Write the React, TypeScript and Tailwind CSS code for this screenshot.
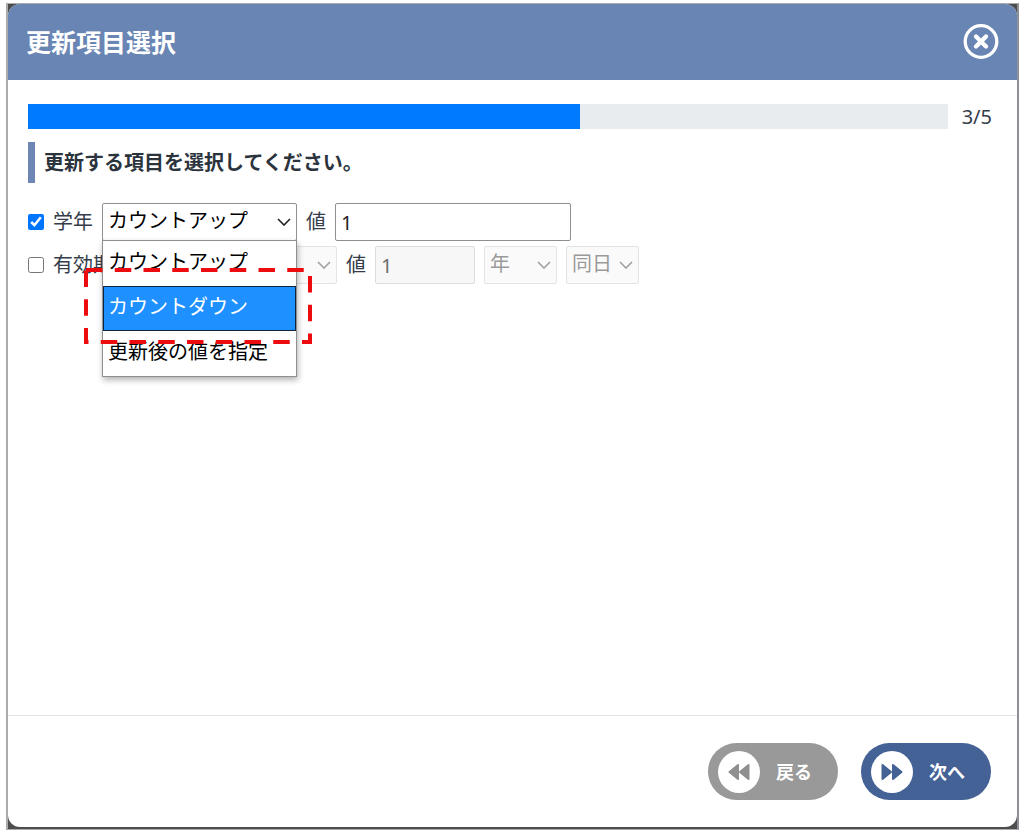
import React, { useState } from 'react';
import clsx from 'clsx';

const MODES = ['カウントアップ', 'カウントダウン', '更新後の値を指定'];

const STEP = 3;
const TOTAL_STEPS = 5;

interface SelectFieldProps {
  label: string;
  options: string[];
  className?: string;
  disabled?: boolean;
  value?: string;
  onChange?: (value: string) => void;
  children?: React.ReactNode;
}

function SelectField({ label, options, className, disabled, value, onChange, children }: SelectFieldProps) {
  return (
    <div className={clsx('relative shrink-0', className)}>
      <select
        aria-label={label}
        disabled={disabled}
        value={value ?? options[0]}
        onChange={(e) => onChange?.(e.target.value)}
        className="block h-[38px] w-full appearance-none rounded-xs border border-[#8f8f8f] bg-white pb-[2px] pl-[5px] pr-6 text-black disabled:border-[#e3e3e3] disabled:bg-[#fafafa] disabled:text-[#9a9a9a] disabled:opacity-100"
      >
        {options.map((option) => (
          <option key={option}>{option}</option>
        ))}
      </select>
      <svg
        viewBox="0 0 14 8"
        className={clsx(
          'pointer-events-none absolute right-[6px] top-[15px] h-2 w-[14px]',
          disabled ? 'text-[#a0a0a0]' : 'text-[#222]'
        )}
        fill="none"
        stroke="currentColor"
        strokeWidth="1.6"
      >
        <path d="M1 1l6 6 6-6" />
      </svg>
      {children}
    </div>
  );
}

function ArrowsIcon({ flip }: { flip?: boolean }) {
  return (
    <svg
      viewBox="0 0 22 18"
      className={clsx('h-[18px] w-[22px]', flip && '-scale-x-100')}
      fill="currentColor"
      stroke="currentColor"
      strokeWidth="2"
      strokeLinejoin="round"
    >
      <path d="M1.5 2v14L10 9z" />
      <path d="M12 2v14l8.500-7z" />
    </svg>
  );
}

export default function App() {
  const [mode, setMode] = useState(MODES[0]);
  const [active, setActive] = useState(MODES[1]);
  const [open, setOpen] = useState(true);

  const choose = (option: string) => {
    setMode(option);
    setOpen(false);
  };

  return (
    <div className="flex min-h-screen flex-col bg-white pb-[3px] pl-[6px] pr-[5px] pt-[3px] font-['Noto_Sans','Noto_Sans_CJK_JP',sans-serif] text-xl leading-[30px] text-[#343d49]">
      <div className="flex flex-1 flex-col border-x-2 border-y border-l-[#a9abad] border-r-[#8d9095] border-y-[#a9abad] bg-[#4d4d4d] pb-[2px]">
        <div role="dialog" aria-labelledby="dialog-title" className="flex flex-1 flex-col overflow-hidden rounded-xl bg-white">
          <header className="flex h-[76px] items-center justify-between bg-[#6985b3] px-[18px] text-white">
            <h1 id="dialog-title" className="text-[25px] font-bold">更新項目選択</h1>
            <button type="button" aria-label="閉じる" className="block">
              <svg viewBox="0 0 36 36" className="size-9" fill="none" stroke="currentColor">
                <circle cx="18" cy="17.500" r="15.800" strokeWidth="3.300" />
                <path d="M13 12.500l10 10M23 12.500L13 22.500" strokeWidth="4.400" strokeLinecap="round" />
              </svg>
            </button>
          </header>

          <main className="flex-1 px-5 pt-6">
            <div className="flex h-[25px] items-center gap-[14px] pr-[5px]">
              <div
                role="progressbar"
                aria-valuenow={STEP}
                aria-valuemax={TOTAL_STEPS}
                className="h-full flex-1 bg-[#e9ecef]"
              >
                <div className="h-full bg-[#007bff]" style={{ width: `${(STEP / TOTAL_STEPS) * 100}%` }} />
              </div>
              <span>{STEP}/{TOTAL_STEPS}</span>
            </div>

            <h2 className="mt-[13px] flex h-[41px] items-center border-l-[7px] border-[#6d86b5] pl-[9px] font-bold text-[#2b333d]">
              更新する項目を選択してください。
            </h2>

            <div className="mt-5 flex flex-col gap-[5px]">
              <div className="flex items-center gap-[9px]">
                <input id="grade" type="checkbox" defaultChecked className="size-4 shrink-0 accent-[#0075ff]" />
                <label htmlFor="grade" className="shrink-0">学年</label>
                <SelectField label="学年の更新方法" options={MODES} value={mode} onChange={setMode} className="w-[195px]">
                  {open && (
                    <>
                      <ul
                        role="listbox"
                        className="absolute left-0 top-[37px] z-10 w-full border border-[#8f8f8f] bg-white text-black shadow-[1px_3px_6px_rgba(0,0,0,0.3)]"
                      >
                        {MODES.map((option) => (
                          <li key={option} role="option" aria-selected={option === active}>
                            <button
                              type="button"
                              onMouseEnter={() => setActive(option)}
                              onClick={() => choose(option)}
                              className={clsx(
                                'block h-[45px] w-full border pb-[3px] pl-1 text-left whitespace-nowrap',
                                option === active ? 'border-[#10243c] bg-[#1e90ff] text-white' : 'border-transparent'
                              )}
                            >
                              {option}
                            </button>
                          </li>
                        ))}
                      </ul>
                      {/* callout around the highlighted option */}
                      <svg
                        viewBox="0 0 230 78"
                        className="pointer-events-none absolute -left-[18px] top-[65px] z-20 h-[78px] w-[230px] max-w-none"
                        fill="none"
                        stroke="#ec0c10"
                        strokeWidth="4"
                      >
                        <rect x="2" y="2" width="224" height="72" strokeDasharray="16.5 12.25" />
                      </svg>
                    </>
                  )}
                </SelectField>
                <label htmlFor="grade-value" className="shrink-0">値</label>
                <input
                  id="grade-value"
                  type="text"
                  defaultValue="1"
                  className="h-[38px] w-[236px] rounded-xs border border-[#8f8f8f] bg-white px-[5px] text-[#222]"
                />
              </div>

              <div className="flex items-center gap-[9px]">
                <input id="expiry" type="checkbox" className="size-4 shrink-0 accent-[#0075ff]" />
                <label htmlFor="expiry" className="shrink-0">有効期限</label>
                <SelectField label="有効期限の更新方法" options={MODES} disabled className="w-[195px]" />
                <label htmlFor="expiry-value" className="shrink-0">値</label>
                <input
                  id="expiry-value"
                  type="text"
                  defaultValue="1"
                  disabled
                  className="h-[38px] w-[100px] rounded-xs border border-[#dcdcdc] bg-[#f7f7f7] px-[5px] text-[#6d6d6d]"
                />
                <SelectField label="単位" options={['年', '月', '日']} disabled className="w-[73px]" />
                <SelectField label="基準日" options={['同日', '月末']} disabled className="w-[73px]" />
              </div>
            </div>
          </main>

          <footer className="flex justify-end gap-[23px] border-t border-[#e3e5e8] pb-[27px] pr-[26px] pt-[27px] text-lg font-bold text-white">
            <button type="button" className="flex h-[57px] w-[130px] items-center gap-4 rounded-full bg-[#999] pl-[10px]">
              <span className="flex size-[42px] items-center justify-center rounded-full bg-white text-[#8f8f8f]">
                <ArrowsIcon flip />
              </span>
              戻る
            </button>
            <button type="button" className="flex h-[57px] w-[130px] items-center gap-4 rounded-full bg-[#446296] pl-[10px]">
              <span className="flex size-[42px] items-center justify-center rounded-full bg-white text-[#446296]">
                <ArrowsIcon />
              </span>
              次へ
            </button>
          </footer>
        </div>
      </div>
    </div>
  );
}
